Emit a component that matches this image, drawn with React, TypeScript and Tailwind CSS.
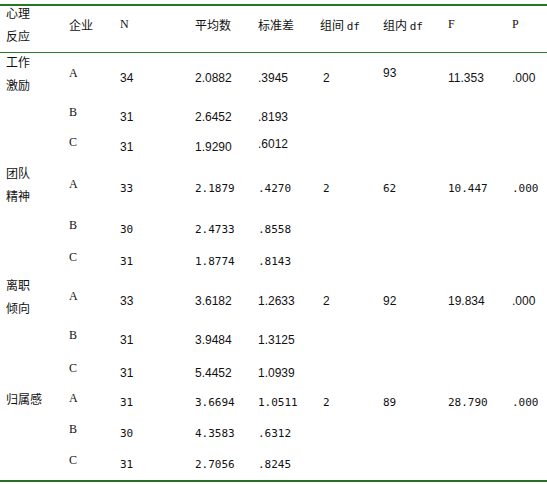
type Row = {
  letter: string;
  n: string;
  mean: string;
  sd: string;
  between?: string;
  within?: string;
  f?: string;
  p?: string;
  h: string;
  withinUp?: boolean;
  sdUp?: boolean;
};

type Group = { label: string[]; mono: boolean; rows: Row[] };

const groups: Group[] = [
  {
    label: ["工作", "激励"],
    mono: false,
    rows: [
      { letter: "A", n: "34", mean: "2.0882", sd: ".3945", between: "2", within: "93", f: "11.353", p: ".000", h: "h-[50px]", withinUp: true },
      { letter: "B", n: "31", mean: "2.6452", sd: ".8193", h: "h-[28px]" },
      { letter: "C", n: "31", mean: "1.9290", sd: ".6012", h: "h-[32px]", sdUp: true },
    ],
  },
  {
    label: ["团队", "精神"],
    mono: true,
    rows: [
      { letter: "A", n: "33", mean: "2.1879", sd: ".4270", between: "2", within: "62", f: "10.447", p: ".000", h: "h-[52px]" },
      { letter: "B", n: "30", mean: "2.4733", sd: ".8558", h: "h-[30px]" },
      { letter: "C", n: "31", mean: "1.8774", sd: ".8143", h: "h-[34px]" },
    ],
  },
  {
    label: ["离职", "倾向"],
    mono: false,
    rows: [
      { letter: "A", n: "33", mean: "3.6182", sd: "1.2633", between: "2", within: "92", f: "19.834", p: ".000", h: "h-[44px]" },
      { letter: "B", n: "31", mean: "3.9484", sd: "1.3125", h: "h-[34px]" },
      { letter: "C", n: "31", mean: "5.4452", sd: "1.0939", h: "h-[32px]" },
    ],
  },
  {
    label: ["归属感"],
    mono: true,
    rows: [
      { letter: "A", n: "31", mean: "3.6694", sd: "1.0511", between: "2", within: "89", f: "28.790", p: ".000", h: "h-[28px]" },
      { letter: "B", n: "30", mean: "4.3583", sd: ".6312", h: "h-[34px]" },
      { letter: "C", n: "31", mean: "2.7056", sd: ".8245", h: "h-[28px]" },
    ],
  },
];

// fixed row track so tall cells overflow instead of stretching the row
const cols =
  "grid grid-cols-[63px_51px_75px_63px_62px_63px_65px_64px_1fr] grid-rows-[100%] items-center pl-[6px]";
const cjk = "font-['Noto_Sans_CJK_SC',sans-serif] text-[12px] leading-[23px]";
const serif = "font-['Liberation_Serif',serif] text-[12px] leading-[14px]";
const monoNum = "font-['DejaVu_Sans_Mono',monospace] text-[11px] leading-[14px]";
const propNum = "font-['Liberation_Sans',sans-serif] text-[12px] leading-[14px]";

const App = () => {
  return (
    <div className="w-[547px] h-[484px] bg-white text-[#111] pt-[4px]">
      <div className="border-t-2 border-[#1f7a22]" />

      {/* header */}
      <div className={`${cols} h-[46px]`}>
        <div className={`${cjk} pb-[10px]`}>
          <div>心理</div>
          <div>反应</div>
        </div>
        <div className={`${cjk} pb-[10px]`}>企业</div>
        <div className={`${serif} pb-[10px]`}>N</div>
        <div className={`${cjk} pb-[10px]`}>平均数</div>
        <div className={`${cjk} pb-[10px]`}>标准差</div>
        <div className={`${cjk} pb-[10px]`}>
          组间 <span className={monoNum}>df</span>
        </div>
        <div className={`${cjk} pb-[10px]`}>
          组内 <span className={monoNum}>df</span>
        </div>
        <div className={`${serif} pb-[10px]`}>F</div>
        <div className={`${serif} pb-[10px]`}>P</div>
      </div>
      <div className="border-t border-[#2b7d2b]" />

      {groups.map((g) =>
        g.rows.map((r, i) => {
          const num = g.mono ? monoNum : propNum;
          return (
            <div key={g.label.join("") + r.letter} className={`${cols} ${r.h}`}>
              <div className={`${cjk} pb-[10px] whitespace-nowrap`}>
                {i === 0 && g.label.map((t) => <div key={t}>{t}</div>)}
              </div>
              <div className={`${serif} pb-[10px]`}>{r.letter}</div>
              <div className={num}>{r.n}</div>
              <div className={num}>{r.mean}</div>
              <div className={`${num} ${r.sdUp ? "pb-[6px]" : ""}`}>{r.sd}</div>
              <div className={`${num} pl-[3px]`}>{r.between}</div>
              <div className={`${num} ${r.withinUp ? "pb-[10px]" : ""}`}>{r.within}</div>
              <div className={num}>{r.f}</div>
              <div className={num}>{r.p}</div>
            </div>
          );
        })
      )}
      <div className="border-t-2 border-[#2a6e2c] mt-[1px]" />
    </div>
  );
};

export default App;
